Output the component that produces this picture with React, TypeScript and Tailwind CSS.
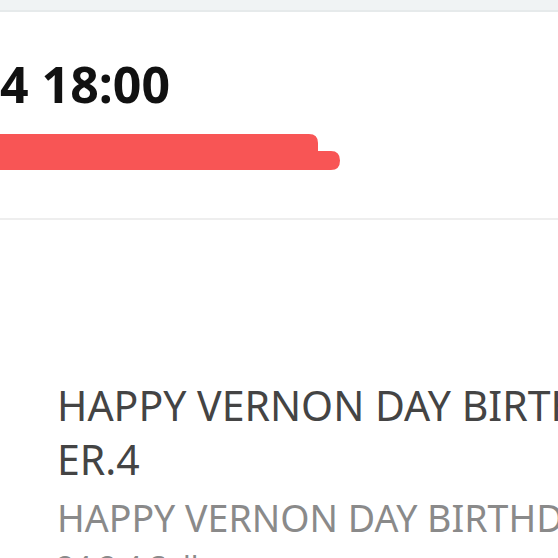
export default function App() {
  return (
    <div className="w-[558px] h-[558px] overflow-hidden bg-white" style={{ fontFamily: '"Noto Sans", sans-serif' }}>
      <div className="h-[12px] bg-[#f0f3f4] border-b-2 border-[#e6eaeb]" />
      <div className="relative h-[208px] border-b-2 border-[#eeeeee]">
        <div className="pt-[47px] text-[50px] leading-[50px] font-bold text-[#111] whitespace-nowrap">4 18:00</div>
        <svg className="absolute left-0 top-[108px]" width="360" height="50" viewBox="0 121 360 50">
          <path d="M0 135 H309 Q318 135 318 144 V152 H331 Q340 152 340 161.5 Q340 171 331 171 H220 Q170 172 100 175 H0 Z" fill="#f85555" />
        </svg>
      </div>
      <div className="pt-[158px] pl-[57px] whitespace-nowrap">
        <div className="text-[#444] text-[41px] leading-[54px]">HAPPY VERNON DAY BIRTHDAY CENT</div>
        <div className="text-[#444] text-[41px] leading-[54px]">ER.4</div>
        <div className="text-[#8a8a8a] text-[37.5px] leading-[48px] mt-[8px]">HAPPY VERNON DAY BIRTHDAY</div>
        <div className="text-[#8a8a8a] text-[30px] leading-[36px] mt-[7px]">24.2.4 Sell</div>
      </div>
    </div>
  );
}
